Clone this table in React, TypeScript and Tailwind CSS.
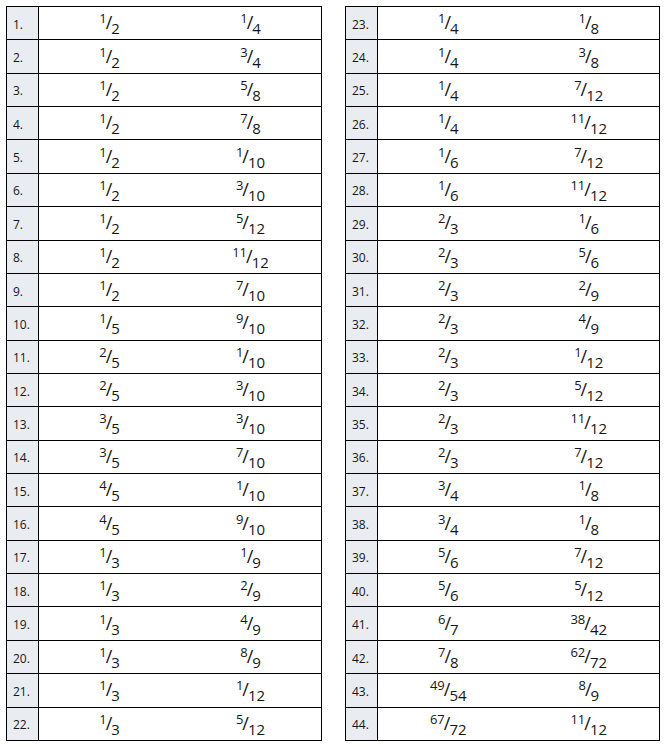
const left: [string, string, string][] = [
  ['1.', '1/2', '1/4'],
  ['2.', '1/2', '3/4'],
  ['3.', '1/2', '5/8'],
  ['4.', '1/2', '7/8'],
  ['5.', '1/2', '1/10'],
  ['6.', '1/2', '3/10'],
  ['7.', '1/2', '5/12'],
  ['8.', '1/2', '11/12'],
  ['9.', '1/2', '7/10'],
  ['10.', '1/5', '9/10'],
  ['11.', '2/5', '1/10'],
  ['12.', '2/5', '3/10'],
  ['13.', '3/5', '3/10'],
  ['14.', '3/5', '7/10'],
  ['15.', '4/5', '1/10'],
  ['16.', '4/5', '9/10'],
  ['17.', '1/3', '1/9'],
  ['18.', '1/3', '2/9'],
  ['19.', '1/3', '4/9'],
  ['20.', '1/3', '8/9'],
  ['21.', '1/3', '1/12'],
  ['22.', '1/3', '5/12'],
];

const right: [string, string, string][] = [
  ['23.', '1/4', '1/8'],
  ['24.', '1/4', '3/8'],
  ['25.', '1/4', '7/12'],
  ['26.', '1/4', '11/12'],
  ['27.', '1/6', '7/12'],
  ['28.', '1/6', '11/12'],
  ['29.', '2/3', '1/6'],
  ['30.', '2/3', '5/6'],
  ['31.', '2/3', '2/9'],
  ['32.', '2/3', '4/9'],
  ['33.', '2/3', '1/12'],
  ['34.', '2/3', '5/12'],
  ['35.', '2/3', '11/12'],
  ['36.', '2/3', '7/12'],
  ['37.', '3/4', '1/8'],
  ['38.', '3/4', '1/8'],
  ['39.', '5/6', '7/12'],
  ['40.', '5/6', '5/12'],
  ['41.', '6/7', '38/42'],
  ['42.', '7/8', '62/72'],
  ['43.', '49/54', '8/9'],
  ['44.', '67/72', '11/12'],
];

const Frac = ({ value }: { value: string }) => {
  const [n, d] = value.split('/');
  return (
    <span className="whitespace-nowrap leading-none">
      <span className="text-[13px] align-[6px]">{n}</span>
      <span className="text-[18px] -mx-[1px]">/</span>
      <span className="text-[15px] align-[-5px]">{d}</span>
    </span>
  );
};

const Sheet = ({ rows, width }: { rows: [string, string, string][]; width: string }) => {
  return (
    <div className={`border-[1.5px] border-black h-[735px] flex flex-col ${width}`}>
      {rows.map(([num, a, b], i) => (
        <div
          key={num}
          className={`flex flex-1 ${i > 0 ? 'border-t-[1.5px] border-black' : ''}`}
        >
          <div className="w-[32px] shrink-0 bg-[#e9ecf1] border-r-[1.5px] border-black flex items-center pl-[6px] pt-[3px] text-[12px]">
            {num}
          </div>
          <div className="flex-1 flex items-center justify-center pt-[2px]">
            <Frac value={a} />
          </div>
          <div className="flex-1 flex items-center justify-center pt-[2px]">
            <Frac value={b} />
          </div>
        </div>
      ))}
    </div>
  );
};

const App = () => {
  return (
    <div className="w-[670px] h-[747px] bg-white pt-[6px] pl-[6px] flex items-start gap-[23px] text-[#161616] font-['Open_Sans',sans-serif]">
      <Sheet rows={left} width="w-[316px]" />
      <Sheet rows={right} width="w-[315px]" />
    </div>
  );
};

export default App;
